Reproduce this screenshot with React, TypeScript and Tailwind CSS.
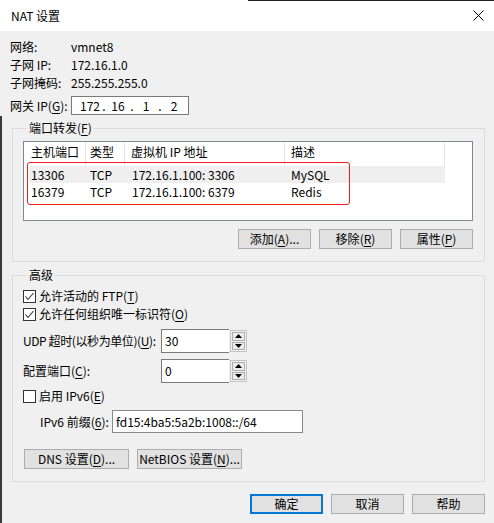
import React from "react";

// accelerator key, shown underlined like a Win32 dialog
function Acc({ k }: { k: string }) {
  return (
    <>
      (<span className="underline underline-offset-[2px]">{k}</span>)
    </>
  );
}

function Btn({ children, className = "" }: { children: React.ReactNode; className?: string }) {
  return (
    <div
      className={`flex h-[20px] items-center justify-center border border-[#adadad] bg-[#e1e1e1] leading-[16px] ${className}`}
    >
      {children}
    </div>
  );
}

function Checkbox({ checked }: { checked?: boolean }) {
  return (
    <div className="flex h-[13px] w-[13px] shrink-0 items-center justify-center border border-[#333] bg-white">
      {checked && (
        <svg width="11" height="11" viewBox="0 0 11 11">
          <polyline points="1.5,5.5 4,8.5 9.5,2" fill="none" stroke="#333" strokeWidth="1.1" />
        </svg>
      )}
    </div>
  );
}

function Spinner() {
  return (
    <div className="ml-[1px] flex h-[22px] w-[17px] shrink-0 flex-col gap-[1px] border border-[#c4c4c4] p-[1px]">
      <div className="flex flex-1 items-center justify-center border border-[#adadad] bg-[#ececec]">
        <svg width="7" height="4" viewBox="0 0 7 4">
          <polygon points="3.5,0 7,4 0,4" fill="#000" />
        </svg>
      </div>
      <div className="flex flex-1 items-center justify-center border border-[#adadad] bg-[#ececec]">
        <svg width="7" height="4" viewBox="0 0 7 4">
          <polygon points="0,0 7,0 3.5,4" fill="#000" />
        </svg>
      </div>
    </div>
  );
}

const rows = [
  { port: "13306", type: "TCP", addr: "172.16.1.100: 3306", desc: "MySQL" },
  { port: "16379", type: "TCP", addr: "172.16.1.100: 6379", desc: "Redis" },
];

export default function App() {
  return (
    <div className="relative h-[523px] w-[494px] overflow-hidden whitespace-nowrap bg-[#f0f0f0] font-['Noto_Sans_CJK_SC','Noto_Sans',sans-serif] text-[12px] leading-[16px] text-black">
      {/* title bar */}
      <div className="flex h-[31px] items-center justify-between bg-white pl-[11px] pr-[10px]">
        <span>NAT 设置</span>
        <svg width="11" height="11" viewBox="0 0 11 11">
          <path d="M0.5 0.5 L10.5 10.5 M10.5 0.5 L0.5 10.5" stroke="#000" strokeWidth="1" />
        </svg>
      </div>

      {/* network info */}
      <div className="pl-[10px] pt-[7px]">
        <div className="flex h-[18px] items-center">
          <span className="w-[61px]">网络:</span>
          <span>vmnet8</span>
        </div>
        <div className="flex h-[18px] items-center">
          <span className="w-[61px]">子网 IP:</span>
          <span>172.16.1.0</span>
        </div>
        <div className="flex h-[18px] items-center">
          <span className="w-[61px]">子网掩码:</span>
          <span>255.255.255.0</span>
        </div>
        <div className="mt-[4px] flex h-[19px] items-center">
          <span className="w-[61px] shrink-0">
            网关 IP<Acc k="G" />:
          </span>
          <div className="flex h-[19px] w-[118px] items-center border border-[#7a7a7a] bg-white pl-[6px]">
            <span className="w-[24px] text-center">172</span>
            <span className="w-[4px] text-center">.</span>
            <span className="w-[24px] text-center">16</span>
            <span className="w-[4px] text-center">.</span>
            <span className="w-[24px] text-center">1</span>
            <span className="w-[4px] text-center">.</span>
            <span className="w-[24px] text-center">2</span>
          </div>
        </div>
      </div>

      {/* port forwarding */}
      <fieldset className="ml-[12px] mt-[5px] w-[473px] border border-[#dcdcdc] px-[10px] pb-[12px] pt-[5px]">
        <legend className="ml-[4px] h-[16px] px-[2px] leading-[16px]">
          端口转发<Acc k="F" />
        </legend>
        <div className="relative h-[80px] w-[450px] border border-[#828790] bg-white">
          <div className="flex h-[24px]">
            <div className="w-[62px] border-r border-[#e5e5e5] pl-[7px] pt-[2px]">主机端口</div>
            <div className="w-[39px] border-r border-[#e5e5e5] pl-[4px] pt-[2px]">类型</div>
            <div className="w-[160px] border-r border-[#e5e5e5] pl-[6px] pt-[2px]">虚拟机 IP 地址</div>
            <div className="w-[160px] border-r border-[#e5e5e5] pl-[6px] pt-[2px]">描述</div>
          </div>
          {rows.map((r, i) => (
            <div key={r.port} className={`ml-[5px] flex h-[17px] w-[416px] items-center ${i === 0 ? "bg-[#efefef]" : ""}`}>
              <span className="w-[57px] pl-[2px]">{r.port}</span>
              <span className="w-[39px] pl-[4px]">{r.type}</span>
              <span className="w-[160px] pl-[7px]">{r.addr}</span>
              <span className="w-[160px] pl-[6px]">{r.desc}</span>
            </div>
          ))}
          <div className="absolute left-[3px] top-[20px] h-[43px] w-[323px] rounded-[3px] border border-[#f01c1c]" />
        </div>
        <div className="mt-[8px] flex w-[450px] justify-end gap-[8px]">
          <Btn className="w-[73px]">
            添加<Acc k="A" />...
          </Btn>
          <Btn className="w-[73px]">
            移除<Acc k="R" />
          </Btn>
          <Btn className="w-[73px]">
            属性<Acc k="P" />
          </Btn>
        </div>
      </fieldset>

      {/* advanced */}
      <fieldset className="ml-[12px] mt-[5px] w-[473px] border border-[#dcdcdc] px-[10px] pb-[12px] pt-[4px]">
        <legend className="ml-[4px] h-[16px] px-[2px] leading-[16px]">高级</legend>
        <div className="flex h-[18px] items-center gap-[3px]">
          <Checkbox checked />
          <span>
            允许活动的 FTP<Acc k="T" />
          </span>
        </div>
        <div className="flex h-[18px] items-center gap-[3px]">
          <Checkbox checked />
          <span>
            允许任何组织唯一标识符<Acc k="O" />
          </span>
        </div>
        <div className="mt-[6px] flex h-[24px] items-center">
          <span className="w-[138px] shrink-0 tracking-[-0.4px]">
            UDP 超时(以秒为单位)<Acc k="U" />:
          </span>
          <div className="flex h-[24px] w-[68px] shrink-0 items-center border border-r-0 border-[#7a7a7a] bg-white pl-[3px]">30</div>
          <Spinner />
        </div>
        <div className="mt-[6px] flex h-[24px] items-center">
          <span className="w-[138px] shrink-0">
            配置端口<Acc k="C" />:
          </span>
          <div className="flex h-[24px] w-[68px] shrink-0 items-center border border-r-0 border-[#7a7a7a] bg-white pl-[3px]">0</div>
          <Spinner />
        </div>
        <div className="mt-[4px] flex h-[18px] items-center gap-[3px]">
          <Checkbox />
          <span>
            启用 IPv6<Acc k="E" />
          </span>
        </div>
        <div className="mt-[5px] flex h-[23px] items-center">
          <span className="ml-[17px] w-[72px] shrink-0">
            IPv6 前缀<Acc k="6" />:
          </span>
          <div className="flex h-[23px] w-[191px] items-center border border-[#8a8a8a] bg-white pl-[3px]">
            fd15:4ba5:5a2b:1008::/64
          </div>
        </div>
        <div className="ml-[1px] mt-[16px] flex gap-[8px]">
          <Btn className="w-[105px]">
            DNS 设置<Acc k="D" />...
          </Btn>
          <Btn className="w-[105px]">
            NetBIOS 设置<Acc k="N" />...
          </Btn>
        </div>
      </fieldset>

      {/* dialog buttons */}
      <div className="ml-[12px] mt-[12px] flex w-[473px] justify-end gap-[8px]">
        <div className="flex h-[20px] w-[73px] items-center justify-center border-2 border-[#0078d7] bg-[#e1e1e1]">确定</div>
        <Btn className="w-[73px]">取消</Btn>
        <Btn className="w-[73px]">帮助</Btn>
      </div>

      {/* edges of the window behind */}
      <div className="absolute left-[248px] right-0 top-0 h-px bg-[#1f1f1f]" />
      <div className="absolute bottom-0 left-0 top-[116px] w-[2px] bg-[#3a3a3a]" />
    </div>
  );
}
